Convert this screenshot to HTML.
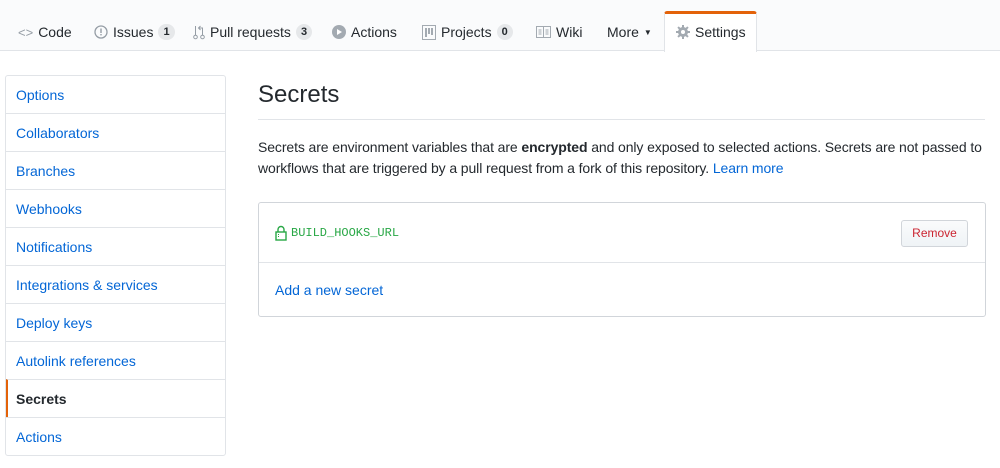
<!DOCTYPE html>
<html><head><style>
*{box-sizing:border-box;margin:0;padding:0}
body{width:1000px;height:468px;background:#fff;font-family:"Liberation Sans",sans-serif;font-size:14px;color:#24292e;position:relative;overflow:hidden}
.hdr{position:absolute;left:0;top:0;width:1000px;height:51px;background:#fafbfc;border-bottom:1px solid #e1e4e8}
.tab{position:absolute;top:23px;font-size:14px;color:#586069;display:flex;align-items:center;gap:5px;height:18px}
.cnt{display:inline-block;background:#e6e8ea;border-radius:9px;font-size:11px;font-weight:bold;color:#24292e;padding:2px 5px;line-height:12px}
.set{position:absolute;left:664px;top:11px;width:93px;height:41px;background:#fff;border:1px solid #e1e4e8;border-bottom:none;border-top:3px solid #e36209;border-radius:3px 3px 0 0}
.side{position:absolute;left:5px;top:75px;width:221px;height:381px;border:1px solid #e1e4e8;border-radius:3px}
.side div{height:38px;border-top:1px solid #e1e4e8;padding-left:10px;line-height:39px;color:#0366d6;font-size:14px}
.side div:first-child{border-top:none;height:37px}
.side .act{color:#24292e;font-weight:bold;border-left:2px solid #e36209;padding-left:8px}
a{color:#0366d6;text-decoration:none}
</style></head><body>
<div class="hdr"></div>
<div class="set"></div>
<div class="tab" style="left:18px"><span style="color:#959da5;font-size:13px">&lt;&gt;</span><span style="color:#24292e">Code</span></div>
<div class="tab" style="left:94px"><svg width="14" height="14"><circle cx="7" cy="7" r="6" fill="none" stroke="#959da5" stroke-width="1.3"/><rect x="6.3" y="3.5" width="1.4" height="4.5" fill="#959da5"/><rect x="6.3" y="9" width="1.4" height="1.4" fill="#959da5"/></svg><span style="color:#24292e">Issues</span><span class="cnt">1</span></div>
<div class="tab" style="left:193px"><svg width="12" height="16"><circle cx="2.5" cy="13" r="1.8" fill="none" stroke="#959da5"/><circle cx="9.5" cy="13" r="1.8" fill="none" stroke="#959da5"/><path d="M2.5 2v9M9.5 11V4H6M7.5 2 5.5 4l2 2" fill="none" stroke="#959da5"/></svg><span style="color:#24292e">Pull requests</span><span class="cnt">3</span></div>
<div class="tab" style="left:332px"><svg width="14" height="14"><circle cx="7" cy="7" r="7" fill="#a3aab1"/><path d="M5 4v6l5-3z" fill="#fff"/></svg><span style="color:#24292e">Actions</span></div>
<div class="tab" style="left:422px"><svg width="14" height="15"><rect x=".5" y=".5" width="13" height="14" fill="none" stroke="#a3aab1"/><rect x="3" y="3" width="2" height="9" fill="#a3aab1"/><rect x="6" y="3" width="2" height="6" fill="#a3aab1"/><rect x="9" y="3" width="2" height="7" fill="#a3aab1"/></svg><span style="color:#24292e">Projects</span><span class="cnt">0</span></div>
<div class="tab" style="left:536px"><svg width="15" height="12"><rect x=".5" y=".5" width="14" height="11" fill="none" stroke="#a3aab1"/><path d="M7.5 1v10M2.5 4h3M2.5 6h3M2.5 8h3M9.5 4h3M9.5 6h3M9.5 8h3" stroke="#a3aab1"/></svg><span style="color:#24292e">Wiki</span></div>
<div class="tab" style="left:607px"><span style="color:#24292e">More</span><span style="font-size:8px;color:#24292e">▼</span></div>
<div class="tab" style="left:676px"><svg width="14" height="14" viewBox="0 0 14 14"><g fill="#a3aab1"><circle cx="7" cy="7" r="5"/><rect x="6" y="0" width="2" height="14"/><rect x="0" y="6" width="14" height="2"/><rect x="6" y="0" width="2" height="14" transform="rotate(45 7 7)"/><rect x="6" y="0" width="2" height="14" transform="rotate(-45 7 7)"/></g><circle cx="7" cy="7" r="2" fill="#fff"/></svg><span style="color:#24292e">Settings</span></div>

<div class="side">
<div>Options</div><div>Collaborators</div><div>Branches</div><div>Webhooks</div><div>Notifications</div><div>Integrations &amp; services</div><div>Deploy keys</div><div>Autolink references</div><div class="act">Secrets</div><div>Actions</div>
</div>

<div style="position:absolute;left:258px;top:81px;font-size:24px;color:#24292e">Secrets</div>
<div style="position:absolute;left:258px;top:119px;width:727px;border-top:1px solid #e1e4e8"></div>
<div style="position:absolute;left:258px;top:137px;width:742px;line-height:21px;font-size:14px;letter-spacing:-0.1px">Secrets are environment variables that are <b>encrypted</b> and only exposed to selected actions. Secrets are not passed to<br>workflows that are triggered by a pull request from a fork of this repository. <a>Learn more</a></div>

<div style="position:absolute;left:258px;top:202px;width:728px;height:115px;border:1px solid #d1d5da;border-radius:3px">
<div style="height:60px;border-bottom:1px solid #e1e4e8;position:relative">
<svg style="position:absolute;left:16px;top:22px" width="12" height="16"><path d="M3 7V4.5a3 3 0 0 1 6 0V7" fill="none" stroke="#28a745" stroke-width="1.4"/><rect x="1" y="7" width="10" height="8" fill="none" stroke="#28a745" stroke-width="1.4"/><path d="M3.5 9v4" stroke="#28a745" stroke-dasharray="1 1"/></svg>
<span style="position:absolute;left:32px;top:23px;font-family:'Liberation Mono',monospace;font-size:12px;color:#28a745">BUILD_HOOKS_URL</span>
<div style="position:absolute;right:17px;top:17px;width:67px;height:27px;border:1px solid #d1d5da;border-radius:3px;background:linear-gradient(#fafbfc,#eff3f6);color:#cb2431;font-size:12px;text-align:center;line-height:25px">Remove</div>
</div>
<a style="position:absolute;left:16px;top:79px;font-size:14px">Add a new secret</a>
</div>
</body></html>
